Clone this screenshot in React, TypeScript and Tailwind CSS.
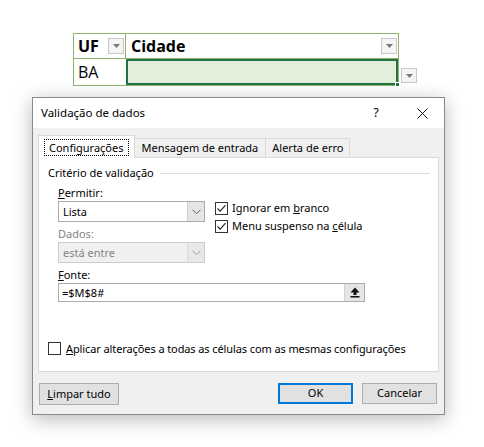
import React from "react";

// small down chevron used by the combo boxes
function Chevron({ color = "#606060" }: { color?: string }) {
    return (
        <svg width="9" height="6" viewBox="0 0 9 6">
            <path d="M0.5 0.8 L4.5 4.8 L8.5 0.8" fill="none" stroke={color} strokeWidth="1" />
        </svg>
    );
}

// filter button on the table header cells
function FilterButton() {
    return (
        <div className="w-[16px] h-[16px] border border-[#c8c8c8] bg-[#f4f4f4] flex items-center justify-center">
            <svg width="7" height="4" viewBox="0 0 7 4">
                <path d="M0 0 L7 0 L3.5 4 Z" fill="#7a7a7a" />
            </svg>
        </div>
    );
}

function CheckBox({ checked }: { checked: boolean }) {
    return (
        <div className="w-[13px] h-[13px] border border-[#333] bg-white flex items-center justify-center shrink-0">
            {checked && (
                <svg width="11" height="11" viewBox="0 0 11 11">
                    <path d="M1.5 5.5 L4.2 8.2 L9.5 2.2" fill="none" stroke="#222" strokeWidth="1.1" />
                </svg>
            )}
        </div>
    );
}

function Select({ value, disabled }: { value: string; disabled?: boolean }) {
    return (
        <div className={`w-[147px] h-[21px] border flex ${disabled ? "border-[#cccccc] bg-[#f0f0f0]" : "border-[#acacac] bg-white"}`}>
            <div className={`flex-1 pl-[4px] leading-[19px] ${disabled ? "text-[#838383]" : "text-black"}`}>{value}</div>
            <div className={`w-[17px] flex items-center justify-center border-l ${disabled ? "border-[#dcdcdc] bg-[#e8e8e8]" : "border-[#d0d0d0] bg-[#e5e5e5]"}`}>
                <Chevron color={disabled ? "#9a9a9a" : "#606060"} />
            </div>
        </div>
    );
}

function DialogButton({ children, primary }: { children: React.ReactNode; primary?: boolean }) {
    return (
        <div
            className={`w-[75px] h-[21px] flex items-center justify-center bg-[#e1e1e1] ${primary ? "border-2 border-[#0078d7]" : "border border-[#adadad]"}`}
        >
            {children}
        </div>
    );
}

export default function App() {
    return (
        <div className="w-[484px] h-[447px] bg-white relative overflow-hidden font-['Noto_Sans',sans-serif] text-[11px] text-black">
            {/* sheet with the UF / Cidade table */}
            <div className="pt-[33px] pl-[73px] flex items-start">
                <div className="border border-[#8fb56c] flex flex-col w-[326px] font-['Open_Sans',sans-serif]">
                    <div className="h-[25px] flex border-b border-[#8fb56c]">
                        <div className="w-[52px] border-r border-[#8fb56c] flex items-center justify-between pl-[4px] pr-[1px]">
                            <span className="font-bold text-[16px] leading-none">UF</span>
                            <FilterButton />
                        </div>
                        <div className="flex-1 flex items-center justify-between pl-[5px] pr-[1px]">
                            <span className="font-bold text-[16px] leading-none">Cidade</span>
                            <FilterButton />
                        </div>
                    </div>
                    <div className="h-[26px] flex">
                        <div className="w-[52px] flex items-center pl-[4px] text-[16px]">BA</div>
                        <div className="flex-1 border-2 border-[#217346] bg-[#e2efda] relative">
                            <div className="absolute right-[-4px] bottom-[-4px] w-[5px] h-[5px] bg-[#217346] border border-white" />
                        </div>
                    </div>
                </div>
                <div className="mt-[35px] ml-[2px] w-[16px] h-[15px] border border-[#c8c8c8] bg-[#f4f4f4] flex items-center justify-center">
                    <svg width="7" height="4" viewBox="0 0 7 4">
                        <path d="M0 0 L7 0 L3.5 4 Z" fill="#7a7a7a" />
                    </svg>
                </div>
            </div>

            {/* Validação de dados dialog */}
            <div className="absolute left-[32px] top-[97px] w-[413px] h-[318px] border border-[#8a8a8a] bg-[#f0f0f0] shadow-[0_4px_18px_rgba(0,0,0,0.28)] flex flex-col">
                <div className="h-[30px] bg-white flex items-center pl-[8px] shrink-0 text-[12px]">
                    <span className="flex-1 text-[11.5px]">Validação de dados</span>
                    <span className="w-[20px] text-center mr-[31px]">?</span>
                    <svg width="11" height="11" viewBox="0 0 11 11" className="mr-[16px]">
                        <path d="M0.5 0.5 L10.5 10.5 M10.5 0.5 L0.5 10.5" stroke="#111" strokeWidth="1" />
                    </svg>
                </div>

                <div className="px-[5px] pt-[7px] flex flex-col">
                    {/* tabs */}
                    <div className="flex items-end h-[23px]">
                        <div className="h-[23px] px-[5px] bg-white border border-b-0 border-[#d9d9d9] flex items-center relative z-10">
                            <span className="border border-dotted border-black px-[4px] leading-[15px]">Configurações</span>
                        </div>
                        <div className="h-[20px] px-[7px] border border-l-0 border-b-0 border-[#d9d9d9] flex items-center">Mensagem de entrada</div>
                        <div className="h-[20px] px-[6px] border border-l-0 border-b-0 border-[#d9d9d9] flex items-center">Alerta de erro</div>
                    </div>

                    {/* tab page */}
                    <div className="h-[215px] -mt-px bg-white border border-[#d9d9d9] flex flex-col pl-[9px] pr-[8px]">
                        <div className="flex items-center mt-[6px] h-[18px]">
                            <span>Critério de validação</span>
                            <div className="flex-1 h-px bg-[#dcdcdc] ml-[6px]" />
                        </div>

                        <div className="pl-[10px] flex flex-col">
                            <div className="flex">
                                <div className="flex flex-col">
                                    <div className="mt-[2px] h-[17px] leading-[17px]"><span className="underline">P</span>ermitir:</div>
                                    <Select value="Lista" />
                                    <div className="mt-[3px] h-[17px] leading-[17px] text-[#838383]">Dados:</div>
                                    <Select value="está entre" disabled />
                                </div>
                                <div className="flex flex-col ml-[10px] mt-[20px] gap-[5px]">
                                    <div className="flex items-center gap-[4px] h-[13px]">
                                        <CheckBox checked />
                                        <span>Ignorar em <span className="underline">b</span>ranco</span>
                                    </div>
                                    <div className="flex items-center gap-[4px] h-[13px]">
                                        <CheckBox checked />
                                        <span>Menu suspenso na <span className="underline">c</span>élula</span>
                                    </div>
                                </div>
                            </div>
                            <div className="mt-[3px] h-[17px] leading-[17px]"><span className="underline">F</span>onte:</div>
                            <div className="w-[307px] h-[19px] border border-[#acacac] flex">
                                <div className="flex-1 pl-[3px] leading-[17px]">=$M$8#</div>
                                <div className="w-[20px] bg-[#e5e5e5] border-l border-[#d0d0d0] flex items-center justify-center">
                                    <svg width="10" height="11" viewBox="0 0 10 11">
                                        <path d="M5 0.5 L9.5 5.5 L6.5 5.5 L6.5 8 L3.5 8 L3.5 5.5 L0.5 5.5 Z" fill="#111" />
                                        <rect x="0.5" y="9" width="9" height="1.5" fill="#111" />
                                    </svg>
                                </div>
                            </div>
                        </div>

                        <div className="mt-auto mb-[14px] flex items-center gap-[5px] whitespace-nowrap">
                            <CheckBox checked={false} />
                            <span className="tracking-[-0.1px]"><span className="underline">A</span>plicar alterações a todas as células com as mesmas configurações</span>
                        </div>
                    </div>

                    {/* bottom buttons */}
                    <div className="flex mt-[11px] ml-px">
                        <div className="w-[80px] h-[22px] flex items-center justify-center bg-[#e1e1e1] border border-[#adadad]">
                            <span><span className="underline">L</span>impar tudo</span>
                        </div>
                        <div className="ml-auto flex gap-[9px] mr-[2px]">
                            <DialogButton primary>OK</DialogButton>
                            <DialogButton>Cancelar</DialogButton>
                        </div>
                    </div>
                </div>
            </div>
        </div>
    );
}
